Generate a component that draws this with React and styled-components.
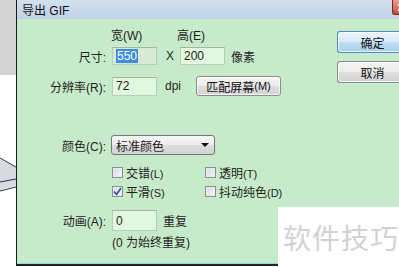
import React from "react";
import styled, { createGlobalStyle } from "styled-components";

const Global = createGlobalStyle`
  html, body {
    margin: 0;
    padding: 0;
    width: 399px;
    height: 267px;
    overflow: hidden;
    background: #ffffff;
  }
  * { box-sizing: border-box; }
`;

const FONT = `"Liberation Sans", "Noto Sans CJK SC", sans-serif`;

const Screen = styled.div`
  position: relative;
  display: flex;
  width: 399px;
  height: 267px;
  font-family: ${FONT};
  font-size: 12px;
  color: #1e1e1e;
`;

const Backdrop = styled.div`
  width: 16px;
  flex: none;
  display: flex;
  flex-direction: column;
`;

const BackdropGray = styled.div`
  height: 78px;
  background: #d5d5d5;
`;

const BackdropWhite = styled.div`
  flex: 1;
  background: #ffffff;
`;

const Dialog = styled.div`
  flex: 1;
  display: flex;
  flex-direction: column;
  border-left: 1px solid #1a1a1a;
  height: 266px;
  border-bottom: 2px solid #222;
`;

const TitleBar = styled.div`
  height: 19px;
  display: flex;
  align-items: center;
  justify-content: space-between;
  padding-left: 5px;
  background: linear-gradient(#d2e0ef, #bfd2e8);
  font-size: 12px;
  color: #111;
`;

const CloseButton = styled.div`
  width: 15px;
  height: 15px;
  align-self: flex-start;
  background: linear-gradient(#e8a08e, #c74a32);
  border: 1px solid #7a2a1c;
  border-top: none;
  border-right: none;
  border-radius: 0 0 0 3px;
  display: flex;
  align-items: center;
  padding-left: 4px;
`;

const Body = styled.div`
  flex: 1;
  display: flex;
  background: #c7ebca;
  border-bottom: 1px solid #8fd6e6;
`;

const Main = styled.div`
  width: 320px;
  display: flex;
  flex-direction: column;
`;

const Side = styled.div`
  display: flex;
  flex-direction: column;
  gap: 8px;
  padding-top: 12px;
`;

const Row = styled.div`
  display: grid;
  grid-template-columns: 89px 1fr;
  column-gap: 6px;
  align-items: center;
  margin-top: ${(p) => p.$top}px;
  height: ${(p) => p.$h}px;
`;

const Label = styled.div`
  text-align: right;
  white-space: nowrap;
`;

const Controls = styled.div`
  display: flex;
  align-items: center;
  white-space: nowrap;
`;

const Head = styled.span`
  width: ${(p) => p.$w}px;
  margin-left: -1px;
`;

const Field = styled.div`
  width: ${(p) => p.$w ?? 45}px;
  height: ${(p) => p.$h ?? 18}px;
  border: 1px solid #b7cdb6;
  border-top-color: #a2b6a1;
  background: ${(p) => (p.$dim ? "#d8e9d6" : "#e1f7df")};
  display: flex;
  align-items: center;
  padding-left: 3px;
  font-size: 12px;
`;

const Selected = styled.span`
  background: #3b8ee0;
  color: #fff;
  padding: 0 1px;
  line-height: 14px;
`;

const Unit = styled.span`
  margin-left: ${(p) => p.$ml}px;
  margin-right: ${(p) => p.$mr ?? 0}px;
`;

const Button = styled.div`
  height: ${(p) => p.$h ?? 21}px;
  width: ${(p) => p.$w}px;
  display: flex;
  align-items: center;
  justify-content: center;
  border: 1px solid ${(p) => (p.$primary ? "#4d8ec2" : "#8c8c8c")};
  border-radius: 3px;
  background: ${(p) =>
    p.$primary
      ? "linear-gradient(#eaf5fd 0%, #d9ecfb 50%, #bedcf3 51%, #a9d1ee 100%)"
      : "linear-gradient(#f5f5f5 0%, #ececec 50%, #dedede 51%, #d3d3d3 100%)"};
  box-shadow: inset 0 0 0 1px rgba(255, 255, 255, 0.7);
  font-size: 12px;
  color: #111;
`;

const SideButton = styled(Button)`
  width: 70px;
  border-right: none;
  border-radius: 3px 0 0 3px;
`;

const Select = styled.div`
  width: 104px;
  height: 20px;
  border: 1px solid #767676;
  border-radius: 3px;
  background: linear-gradient(#f6f6f6 0%, #ededed 50%, #dddddd 51%, #d4d4d4 100%);
  display: flex;
  align-items: center;
  justify-content: space-between;
  padding: 0 5px 0 4px;
  margin-left: -1px;
`;

const Arrow = styled.span`
  width: 0;
  height: 0;
  border-left: 4px solid transparent;
  border-right: 4px solid transparent;
  border-top: 4px solid #111;
`;

const CheckGrid = styled.div`
  display: grid;
  grid-template-columns: 93px auto;
  align-items: center;
`;

const Check = styled.div`
  display: flex;
  align-items: center;
  gap: 3px;
`;

const Box = styled.span`
  width: 11px;
  height: 11px;
  border: 1px solid #8e8f8f;
  background: linear-gradient(135deg, #d7dbe3, #f4f6f9);
  box-shadow: inset 0 0 0 1px #e9ebef;
  display: flex;
  align-items: center;
  justify-content: center;
`;

const Small = styled.span`
  font-size: 11px;
`;

const Note = styled.div`
  grid-column: 2;
`;

const Watermark = styled.div`
  position: absolute;
  right: 0;
  bottom: 0;
  width: 121px;
  height: 60px;
  background: #ffffff;
  display: flex;
  align-items: center;
  padding-left: 5px;
  font-family: "Noto Sans CJK SC", sans-serif;
  font-size: 28px;
  letter-spacing: 1px;
  color: #d2d2d2;
`;

const Lines = () => (
  <svg width="16" height="189" viewBox="0 0 16 189">
    <polygon points="0,84 16,92 16,111 0,115" fill="#d9d9e0" />
    <line x1="0" y1="83" x2="16" y2="92" stroke="#2b2d5e" strokeWidth="1" />
    <line x1="0" y1="107" x2="16" y2="104" stroke="#2b2d5e" strokeWidth="1" />
    <line x1="0" y1="116" x2="16" y2="112" stroke="#2b2d5e" strokeWidth="1" />
  </svg>
);

const Cross = () => (
  <svg width="11" height="9" viewBox="0 0 11 9">
    <path d="M1 1 L9 8 M9 1 L1 8" stroke="#fff" strokeWidth="2" />
  </svg>
);

const Tick = () => (
  <svg width="9" height="9" viewBox="0 0 9 9">
    <path d="M1 4.5 L3.5 7.5 L8 1" fill="none" stroke="#2c4f9e" strokeWidth="1.6" />
  </svg>
);

const CheckItem = ({ checked, main, hint }) => (
  <Check>
    <Box>{checked && <Tick />}</Box>
    <span>
      {main}
      <Small>{hint}</Small>
    </span>
  </Check>
);

export default function App() {
  return (
    <>
      <Global />
      <Screen>
        <Backdrop>
          <BackdropGray />
          <BackdropWhite>
            <Lines />
          </BackdropWhite>
        </Backdrop>
        <Dialog>
          <TitleBar>
            <span>导出 GIF</span>
            <CloseButton>
              <Cross />
            </CloseButton>
          </TitleBar>
          <Body>
            <Main>
              <Row $top={7} $h={14}>
                <Label />
                <Controls>
                  <Head $w={67}>宽(W)</Head>
                  <Head $w={50}>高(E)</Head>
                </Controls>
              </Row>
              <Row $top={7} $h={18}>
                <Label>尺寸:</Label>
                <Controls>
                  <Field $dim>
                    <Selected>550</Selected>
                  </Field>
                  <Unit $ml={9} $mr={6}>X</Unit>
                  <Field>200</Field>
                  <Unit $ml={6}>像素</Unit>
                </Controls>
              </Row>
              <Row $top={11} $h={20}>
                <Label>分辨率(R):</Label>
                <Controls>
                  <Field $h={19}>72</Field>
                  <Unit $ml={8} $mr={15}>dpi</Unit>
                  <Button $w={85} $h={20}>
                    匹配屏幕<Small>(M)</Small>
                  </Button>
                </Controls>
              </Row>
              <Row $top={39} $h={20}>
                <Label>颜色(C):</Label>
                <Controls>
                  <Select>
                    <span>标准颜色</span>
                    <Arrow />
                  </Select>
                </Controls>
              </Row>
              <Row $top={9} $h={14}>
                <Label />
                <CheckGrid>
                  <CheckItem main="交错" hint="(L)" />
                  <CheckItem main="透明" hint="(T)" />
                </CheckGrid>
              </Row>
              <Row $top={5} $h={14}>
                <Label />
                <CheckGrid>
                  <CheckItem checked main="平滑" hint="(S)" />
                  <CheckItem main="抖动纯色" hint="(D)" />
                </CheckGrid>
              </Row>
              <Row $top={13} $h={21}>
                <Label>动画(A):</Label>
                <Controls>
                  <Field $h={21}>0</Field>
                  <Unit $ml={6}>重复</Unit>
                </Controls>
              </Row>
              <Row $top={2} $h={14}>
                <Label />
                <Note>(0 为始终重复)</Note>
              </Row>
            </Main>
            <Side>
              <SideButton $primary $h={22}>确定</SideButton>
              <SideButton $h={22}>取消</SideButton>
            </Side>
          </Body>
        </Dialog>
        <Watermark>软件技巧</Watermark>
      </Screen>
    </>
  );
}
